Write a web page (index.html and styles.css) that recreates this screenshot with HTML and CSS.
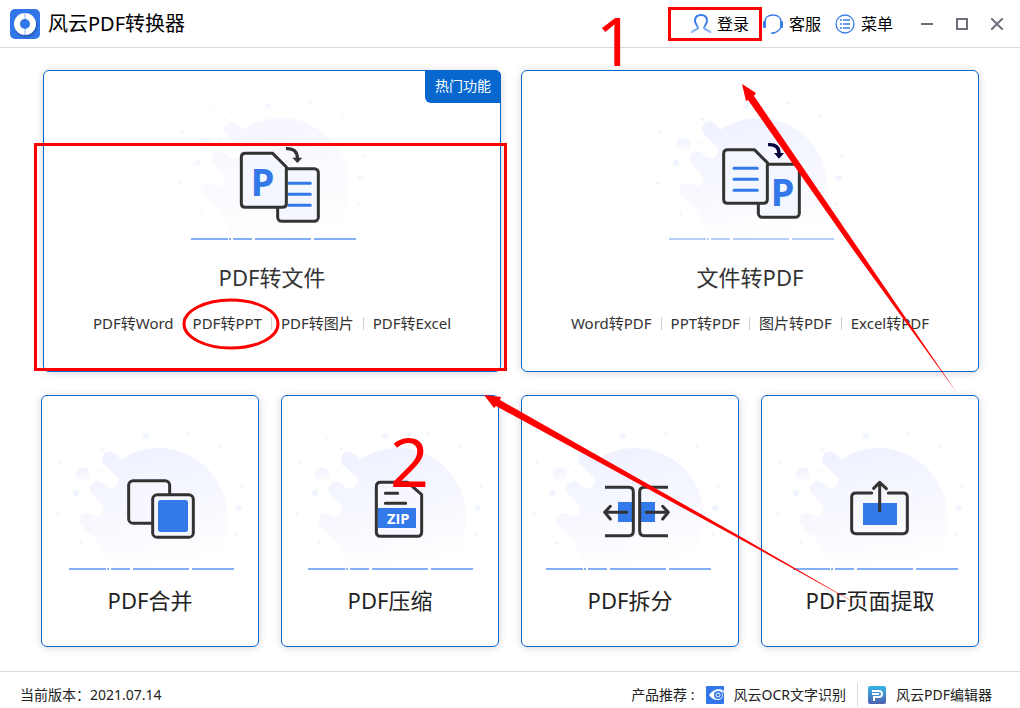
FILE: index.html
```html
<!DOCTYPE html>
<html lang="zh-CN">
<head>
    <meta charset="UTF-8">
    <meta name="viewport" content="width=device-width, initial-scale=1.0">
    <title>风云PDF转换器</title>
    <link rel="stylesheet" href="styles.css">
</head>
<body>
    <!-- Shared artwork: splash background and ground line -->
    <svg class="defs" aria-hidden="true">
        <defs>
            <linearGradient id="fade" x1="0.3" y1="0" x2="0.5" y2="1">
                <stop offset="0" stop-color="#eff1ff"/>
                <stop offset="0.6" stop-color="#f8f9ff"/>
                <stop offset="1" stop-color="#ffffff"/>
            </linearGradient>
            <linearGradient id="editor" x1="0" y1="0" x2="0" y2="1">
                <stop offset="0" stop-color="#35b5e8"/>
                <stop offset="1" stop-color="#4f5fb0"/>
            </linearGradient>
            <linearGradient id="person" x1="0" y1="0" x2="0" y2="1">
                <stop offset="0.5" stop-color="#3a7ce8"/>
                <stop offset="1" stop-color="#a9c8f8"/>
            </linearGradient>
            <g id="splash">
                <path fill="url(#fade)" d="M273 119C307 96 345 84 385 84A207 207 0 0 1 592 291C592 350 572 400 540 447H252C228 423 216 396 205 370C200 358 192 353 184 346L155 318A23 23 0 0 1 172 279C184 279 190 289 202 288A20 20 0 0 0 215 255L182 218A23 23 0 0 1 214 187L228 200A22 22 0 0 0 260 170L222 133A23 23 0 0 1 256 102Z"/>
                <circle fill="url(#fade)" cx="160" cy="165" r="22"/>
                <g fill="#f0f4ff">
                    <circle cx="138" cy="219" r="9"/>
                    <circle cx="348" cy="48" r="9"/>
                    <circle cx="626" cy="264" r="9"/>
                    <circle cx="174" cy="59" r="4"/>
                    <circle cx="206" cy="155" r="4"/>
                </g>
                <path stroke="#f0f1fd" stroke-width="3" d="M84 127h14M91 120v14M210 88h14M217 81v14M469 40h14M476 33v14M565 80h12M571 74v12M627 200h14M634 193v14M613 343h12M619 337v12M144 370h14M151 363v14M76 280h14M83 273v14"/>
            </g>
            <path id="dashes" stroke="#83aff4" stroke-width="6" d="M117 447h111M231 447h6M243 447h57M309 447h168M486 447h126"/>
        </defs>
    </svg>

    <header class="topbar">
        <div class="brand">
            <svg class="logo" viewBox="0 0 30 30" aria-hidden="true">
                <rect width="30" height="30" rx="5" fill="#3277e9"/>
                <circle cx="16" cy="17" r="9" fill="none" stroke="#2a61c4" stroke-width="5"/>
                <circle cx="15" cy="15" r="8" fill="none" stroke="#fff" stroke-width="6"/>
                <path d="M15 4v6M15 20v6" stroke="#8fb3f1"/>
            </svg>
            <h1>风云PDF转换器</h1>
        </div>
        <nav class="menu">
            <button type="button" class="menu-item">
                <svg viewBox="0 0 20 20" aria-hidden="true">
                    <path fill="none" stroke="url(#person)" stroke-width="2" d="M0 19C2 16 6 16 7 14C7 12 4 10 4 7C4 3 6 1 10 1S16 3 16 7C16 10 13 12 13 14C14 16 18 16 20 19"/>
                </svg>
                登录
            </button>
            <button type="button" class="menu-item">
                <svg viewBox="0 0 20 20" aria-hidden="true">
                    <path fill="none" stroke="#3a7ce8" stroke-width="1.3" d="M2 8C2 3 6 1 10 1S18 3 18 8M18 13C17 16 14 18 11 19"/>
                    <rect x="0" y="7" width="3" height="7" rx="1" fill="#3a7ce8"/>
                    <rect x="17" y="7" width="3" height="7" rx="1" fill="#3a7ce8"/>
                    <ellipse cx="10" cy="19" rx="2" ry="1" fill="#3a7ce8"/>
                </svg>
                客服
            </button>
            <button type="button" class="menu-item">
                <svg viewBox="0 0 20 20" aria-hidden="true">
                    <circle cx="10" cy="10" r="9" fill="none" stroke="#3a7ce8" stroke-width="1.3"/>
                    <path stroke="#3a7ce8" stroke-width="1.6" d="M5 6h2M8 6h7M5 10h2M8 10h7M5 14h2M8 14h7"/>
                </svg>
                菜单
            </button>
            <div class="window-buttons">
                <button type="button" aria-label="最小化"><svg viewBox="0 0 12 12"><path d="M0 6h12"/></svg></button>
                <button type="button" aria-label="最大化"><svg viewBox="0 0 12 12"><rect x="1" y="1" width="10" height="10"/></svg></button>
                <button type="button" aria-label="关闭"><svg viewBox="0 0 12 12"><path d="M0 0L12 12M12 0L0 12"/></svg></button>
            </div>
        </nav>
    </header>

    <main>
        <div class="row-large">
            <section class="card card-large">
                <span class="badge">热门功能</span>
                <svg class="art" viewBox="60 30 600 420" aria-hidden="true">
                    <use href="#splash" opacity="0.55"/>
                    <use href="#dashes"/>
                    <g fill="#f4f7ff" stroke="#333" stroke-width="9" stroke-linejoin="round">
                        <rect x="377" y="236" width="122" height="158" rx="12"/>
                        <path stroke="#3379ea" stroke-linecap="round" d="M410 280h65M410 313h65M410 346h65"/>
                        <path d="M280 190H362L403 231V340Q403 352 391 352H280Q268 352 268 340V202Q268 190 280 190Z"/>
                        <path fill="none" stroke-width="10" d="M402 176C425 174 436 185 436 205"/>
                    </g>
                    <path fill="#333" d="M421 203h30l-15 16z"/>
                    <text class="letter" x="296" y="318">P</text>
                </svg>
                <h2>PDF转文件</h2>
                <ul class="links">
                    <li><a href="#">PDF转Word</a></li>
                    <li><a href="#">PDF转PPT</a></li>
                    <li><a href="#">PDF转图片</a></li>
                    <li><a href="#">PDF转Excel</a></li>
                </ul>
            </section>
            <section class="card card-large">
                <svg class="art" viewBox="60 30 600 420" aria-hidden="true">
                    <use href="#splash"/>
                    <use href="#dashes" opacity="0.6"/>
                    <g fill="#f4f7ff" stroke="#333" stroke-width="9" stroke-linejoin="round">
                        <rect x="385" y="223" width="123" height="159" rx="12"/>
                        <path d="M293 179H373L412 218V328Q412 340 400 340H293Q281 340 281 328V191Q281 179 293 179Z"/>
                        <path stroke="#3379ea" stroke-linecap="round" d="M312 235h70M312 268h70M312 301h70"/>
                        <path fill="none" stroke="#00003a" stroke-width="10" d="M414 164C437 162 447 173 447 190"/>
                    </g>
                    <path fill="#00003a" d="M432 189h30l-15 17z"/>
                    <text class="letter" x="422" y="348">P</text>
                </svg>
                <h2>文件转PDF</h2>
                <ul class="links">
                    <li><a href="#">Word转PDF</a></li>
                    <li><a href="#">PPT转PDF</a></li>
                    <li><a href="#">图片转PDF</a></li>
                    <li><a href="#">Excel转PDF</a></li>
                </ul>
            </section>
        </div>

        <div class="row-small">
            <button type="button" class="card card-small">
                <svg class="art" viewBox="60 30 600 420" aria-hidden="true">
                    <use href="#splash"/>
                    <use href="#dashes"/>
                    <g fill="#f6f7ff" stroke="#333" stroke-width="9">
                        <rect x="296" y="182" width="123" height="128" rx="14"/>
                        <rect x="368" y="224" width="122" height="128" rx="14"/>
                    </g>
                    <rect x="384" y="240" width="90" height="96" rx="8" fill="#3379ea"/>
                </svg>
                <span class="card-name">PDF合并</span>
            </button>
            <button type="button" class="card card-small">
                <svg class="art" viewBox="60 30 600 420" aria-hidden="true">
                    <use href="#splash" x="-3"/>
                    <use href="#dashes" x="-3"/>
                    <path fill="#f6f7ff" stroke="#333" stroke-width="9" stroke-linejoin="round" d="M332 187H413L455 224V336Q455 349 442 349H332Q319 349 319 336V200Q319 187 332 187Z"/>
                    <path stroke="#333" stroke-width="9" stroke-linecap="round" d="M346 220h37M346 250h61"/>
                    <rect x="324" y="264" width="114" height="60" fill="#3379ea"/>
                    <text class="zip" x="351" y="311">ZIP</text>
                </svg>
                <span class="card-name">PDF压缩</span>
            </button>
            <button type="button" class="card card-small">
                <svg class="art" viewBox="60 30 600 420" aria-hidden="true">
                    <use href="#splash" x="-10"/>
                    <use href="#dashes" x="-9"/>
                    <rect x="324" y="246" width="111" height="60" fill="#3379ea"/>
                    <path fill="#f4f6ff" d="M366 206h26v138h-26z"/>
                    <g fill="none" stroke="#333" stroke-width="9">
                        <path d="M285 202H356Q370 202 370 216V332Q370 347 356 347H285"/>
                        <path d="M474 202H403Q389 202 389 216V332Q389 347 403 347H474"/>
                        <path stroke-linecap="round" stroke-linejoin="round" d="M350 277H284M301 259L284 277L301 297M409 277H475M458 259L475 277L458 297"/>
                    </g>
                </svg>
                <span class="card-name">PDF拆分</span>
            </button>
            <button type="button" class="card card-small">
                <svg class="art" viewBox="60 30 600 420" aria-hidden="true">
                    <use href="#splash"/>
                    <use href="#dashes" x="12"/>
                    <rect x="339" y="249" width="102" height="66" fill="#3379ea"/>
                    <g fill="none" stroke="#333" stroke-width="9" stroke-linecap="round" stroke-linejoin="round">
                        <path d="M365 219H318Q305 219 305 232V328Q305 341 318 341H459Q472 341 472 328V232Q472 219 459 219H415"/>
                        <path d="M389 272V188M371 205L389 187L409 206"/>
                    </g>
                </svg>
                <span class="card-name">PDF页面提取</span>
            </button>
        </div>
    </main>

    <footer class="statusbar">
        <span>当前版本：2021.07.14</span>
        <div class="products">
            <span>产品推荐 :</span>
            <a href="#" class="product">
                <svg viewBox="0 0 18 18" aria-hidden="true">
                    <rect width="18" height="18" rx="1" fill="#3277e9"/>
                    <path fill="#fff" d="M3 9C7 3 14 2 18 5V7C17 6 16 5 15 5C18 8 17 14 12 14C8 14 5 12 3 9Z"/>
                    <circle cx="12" cy="9" r="4" fill="#3277e9"/>
                    <circle cx="12" cy="9" r="2" fill="none" stroke="#fff"/>
                </svg>
                风云OCR文字识别
            </a>
            <a href="#" class="product">
                <svg viewBox="0 0 18 18" aria-hidden="true">
                    <rect width="18" height="18" rx="2" fill="url(#editor)"/>
                    <path fill="none" stroke="#fff" stroke-width="2" d="M4 5H11C15 5 15 11 11 11H6V15M4 8H11"/>
                </svg>
                风云PDF编辑器
            </a>
        </div>
    </footer>

    <!-- Tutorial marks drawn over the window -->
    <svg class="marks" viewBox="0 0 1020 708" aria-hidden="true">
        <path fill-rule="evenodd" d="M668 7h94v34h-94zM671 10h88v28h-88z"/>
        <path fill-rule="evenodd" d="M34 143h473v228H34zM37 146h467v222H37z"/>
        <ellipse cx="231" cy="324" rx="47" ry="24"/>
        <path d="M742 84L756 93L754 96L858 248L957 393L854 251L748 100L746 101Z"/>
        <path d="M484 395L501 397L500 400L750 542L862 607L749 544L496 406L494 408Z"/>
        <text x="596" y="66">1</text>
        <text x="390" y="487">2</text>
    </svg>
</body>
</html>
```
FILE: styles.css
```css
* {
    box-sizing: border-box;
}

body {
    position: relative;
    display: flex;
    flex-direction: column;
    min-height: 100vh;
    margin: 0;
    background: #fff;
    color: #222;
    font-family: 'Noto Sans', 'Noto Sans CJK SC', sans-serif;
    font-size: 14px;
}

h1, h2, ul {
    margin: 0;
    padding: 0;
    font-weight: 400;
}

a {
    color: inherit;
    text-decoration: none;
}

button {
    padding: 0;
    border: none;
    background: none;
    color: inherit;
    font: inherit;
    cursor: pointer;
}

.defs {
    position: absolute;
    width: 0;
    height: 0;
}

/* Top bar */
.topbar {
    display: flex;
    justify-content: space-between;
    align-items: center;
    height: 48px;
    padding: 0 17px 0 10px;
    border-bottom: 1px solid #d9d9d9;
}

.brand {
    display: flex;
    align-items: center;
    gap: 8px;
}

.logo {
    width: 30px;
    height: 30px;
}

h1 {
    color: #000;
    font-size: 20px;
    line-height: 30px;
}

.menu {
    display: flex;
    align-items: center;
    gap: 14px;
}

.menu-item {
    display: flex;
    align-items: center;
    gap: 6px;
    color: #000;
    font-size: 16px;
    line-height: 24px;
}

.menu-item svg {
    width: 20px;
    height: 20px;
    overflow: visible;
}

.window-buttons {
    display: flex;
    gap: 23px;
    margin-left: 14px;
}

.window-buttons svg {
    display: block;
    width: 12px;
    height: 12px;
    fill: none;
    stroke: #736c7c;
    stroke-width: 2px;
}

/* Cards */
main {
    flex: 1;
    display: flex;
    flex-direction: column;
    gap: 23px;
    padding: 22px 41px 24px;
}

.row-large {
    display: grid;
    grid-template-columns: repeat(2, 1fr);
    gap: 20px;
    padding-left: 2px;
}

.row-small {
    display: grid;
    grid-template-columns: repeat(4, 1fr);
    gap: 22px;
}

.card {
    position: relative;
    display: flex;
    flex-direction: column;
    align-items: center;
    border: 1px solid #0668cf;
    border-radius: 6px;
    background: #fff;
    box-shadow: 0 1px 8px rgba(0, 0, 0, 0.16);
}

.card-large {
    padding: 29px 0 38px;
}

.card-small {
    padding: 34px 0 31px;
}

.badge {
    position: absolute;
    top: -1px;
    right: -1px;
    padding: 0 10px 1px;
    border-radius: 0 6px 0 6px;
    background: #0668cf;
    color: #fff;
    line-height: 32px;
}

.art {
    width: 200px;
    height: 140px;
}

.letter {
    fill: #3379ea;
    font-size: 114px;
    font-weight: 700;
}

.zip {
    fill: #fff;
    font-family: 'Open Sans', sans-serif;
    font-size: 44px;
    font-weight: 700;
}

h2,
.card-name {
    font-size: 22px;
    line-height: 30px;
}

h2 {
    margin-top: 22px;
    color: #333;
}

.card-name {
    margin-top: 15px;
}

.links {
    display: flex;
    align-items: center;
    margin-top: 21px;
    color: #333;
    font-size: 15px;
    line-height: 20px;
    list-style: none;
}

.links li {
    display: flex;
    align-items: center;
}

.links li + li::before {
    content: '';
    width: 1px;
    height: 13px;
    margin: 0 9px;
    background: #d0d0d0;
}

/* Status bar */
.statusbar {
    display: flex;
    justify-content: space-between;
    align-items: center;
    padding: 11px 28px 1px 20px;
    border-top: 1px solid #d9d9d9;
    line-height: 24px;
}

.products {
    display: flex;
    align-items: center;
    gap: 11px;
}

.product {
    display: flex;
    align-items: center;
    gap: 10px;
}

.product + .product {
    padding-left: 10px;
    border-left: 1px solid #d9d9d9;
}

.product svg {
    width: 18px;
    height: 18px;
}

/* Marks */
.marks {
    position: absolute;
    top: 0;
    left: 0;
    width: 1020px;
    height: 708px;
    fill: #f00;
    pointer-events: none;
}

.marks ellipse {
    fill: none;
    stroke: #f00;
    stroke-width: 3px;
}

.marks text {
    font-size: 68px;
}
```
